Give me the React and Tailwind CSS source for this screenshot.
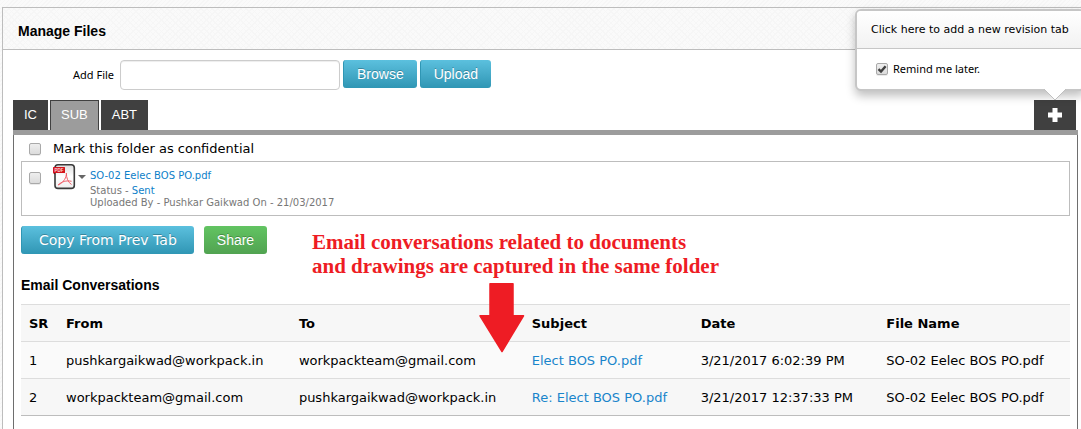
import { useState } from 'react';

const TABS = ['IC', 'SUB', 'ABT'];

const EMAILS = [
  {
    sr: 1,
    from: 'pushkargaikwad@workpack.in',
    to: 'workpackteam@gmail.com',
    subject: 'Elect BOS PO.pdf',
    date: '3/21/2017 6:02:39 PM',
    file: 'SO-02 Eelec BOS PO.pdf',
  },
  {
    sr: 2,
    from: 'workpackteam@gmail.com',
    to: 'pushkargaikwad@workpack.in',
    subject: 'Re: Elect BOS PO.pdf',
    date: '3/21/2017 12:37:33 PM',
    file: 'SO-02 Eelec BOS PO.pdf',
  },
];

const button =
  'h-7 rounded-[3px] text-white text-sm [text-shadow:0_-1px_0_rgba(0,0,0,0.25)] cursor-pointer whitespace-nowrap';
const blue = 'bg-linear-to-b from-[#5bc0de] to-[#2f96b4] border-l border-[#2f96b4]';
const green = 'bg-linear-to-b from-[#62c462] to-[#51a351]';

function Checkbox({ id, label, ...props }) {
  return (
    <span className="relative block size-3 shrink-0">
      <input
        id={id}
        type="checkbox"
        aria-label={label}
        className="peer block appearance-none size-3 rounded-[2px] border border-[#a9a9a9] bg-linear-to-b from-[#eeeeee] to-[#dcdcdc] shadow-[0_1px_0_rgba(0,0,0,0.08)]"
        {...props}
      />
      <svg viewBox="0 0 12 12" className="absolute inset-0 size-3 hidden peer-checked:block pointer-events-none">
        <path d="M2.5 6.2 5 8.6 9.6 3.2" fill="none" stroke="#404040" strokeWidth="2.4" />
      </svg>
    </span>
  );
}

function PdfIcon() {
  return (
    <svg width="23" height="26" viewBox="0 0 23 26" className="shrink-0">
      <defs>
        <linearGradient id="page" x1="0" y1="0" x2="0" y2="1">
          <stop offset="0" stopColor="#dedede" />
          <stop offset="0.5" stopColor="#ffffff" />
          <stop offset="1" stopColor="#eeeeee" />
        </linearGradient>
      </defs>
      <rect x="2" y="0.8" width="19.3" height="23.6" rx="3" fill="url(#page)" stroke="#3a3a3a" strokeWidth="1.6" />
      <path
        d="M13.400 9.500C13.600 13 11 18.500 5.500 20.800M13.400 9.500C13.200 13.500 15 18.500 18.200 20.300M5.500 20.600C9 17.500 13 16.300 18.200 17.200"
        fill="none"
        stroke="#f0606a"
        strokeWidth="1"
        strokeLinecap="round"
      />
      <rect x="0" y="3" width="12" height="6" rx="0.5" fill="#d3141c" />
      <path d="M0 9h2v1.500z" fill="#7d0a0f" />
      <text x="1.500" y="7.800" fontSize="4.500" fontWeight="bold" fill="#ffd9d9" fontFamily="Liberation Sans, sans-serif">
        PDF
      </text>
    </svg>
  );
}

function RevisionPopover() {
  const [remind, setRemind] = useState(true);

  return (
    <div className="absolute -right-1 top-[9px] w-[230px] rounded-[6px] border-2 border-[#c6c6c6] bg-white shadow-[0_5px_10px_rgba(0,0,0,0.25)]">
      <p className="h-[38px] border-b border-[#c6c6c6] rounded-t-[4px] bg-linear-to-b from-white to-[#f2f2f2] pl-3.5 leading-[38px] text-[11px] whitespace-nowrap">
        Click here to add a new revision tab
      </p>
      <div className="flex h-10 items-center gap-[5px] pl-[19px]">
        <Checkbox id="remind" checked={remind} onChange={e => setRemind(e.target.checked)} />
        <label htmlFor="remind" className="font-['Noto_Sans',sans-serif] text-[11px]">
          Remind me later.
        </label>
      </div>
      <svg width="24" height="12" viewBox="0 0 24 12" className="absolute top-full right-4">
        <path d="M1 0 12 11 23 0z" fill="#fff" />
        <path d="M1 0 12 11 23 0" fill="none" stroke="#c0c0c0" />
      </svg>
    </div>
  );
}

export default function App() {
  const [tab, setTab] = useState('SUB');
  const [path, setPath] = useState('');

  return (
    <div className="relative flex min-h-screen flex-col overflow-hidden bg-[#fafafa] bg-[repeating-linear-gradient(135deg,#f6f6f6_0_1px,transparent_1px_3px)] pl-0.5 pt-[7px] font-['DejaVu_Sans',Verdana,sans-serif] text-black">
      <section className="flex grow flex-col border-l border-t border-[#bdbdbd] bg-white">
        <header className="flex h-[42px] items-center border-b border-[#bdbdbd] bg-[#fafafa] bg-[repeating-linear-gradient(45deg,#f6f6f6_0_1px,transparent_1px_4px),repeating-linear-gradient(135deg,#f6f6f6_0_1px,transparent_1px_4px)] pl-[15px] pt-1">
          <h1 className="font-['Liberation_Sans',Arial,sans-serif] text-sm font-bold">Manage Files</h1>
        </header>

        <div className="flex grow flex-col pl-2.5 pr-[3px] pt-2.5">
          <div className="flex items-start gap-[3px] pl-[60px] font-['Liberation_Sans',Arial,sans-serif]">
            <label htmlFor="file" className="w-11 leading-[30px] font-['Noto_Sans',sans-serif] text-[11px] whitespace-nowrap">
              Add File
            </label>
            <input
              id="file"
              type="text"
              value={path}
              onChange={e => setPath(e.target.value)}
              className="h-[30px] w-[220px] rounded-[4px] border border-[#cccccc] bg-white px-2 text-sm shadow-[inset_0_1px_1px_rgba(0,0,0,0.075)]"
            />
            <button type="button" className={`${button} ${blue} px-[13px]`}>Browse</button>
            <button type="button" className={`${button} ${blue} px-[13px]`}>Upload</button>
          </div>

          <div className="mt-2.5 flex items-end gap-0.5 border-b-[5px] border-[#9c9c9c] font-['Liberation_Sans',Arial,sans-serif] text-[13px] text-white">
            {TABS.map(name => (
              <button
                key={name}
                type="button"
                onClick={() => setTab(name)}
                className={`h-[30px] border border-b-0 border-[#404040] px-2.5 pb-0.5 ${
                  name === tab ? 'bg-[#9c9c9c]' : 'bg-[#404040]'
                }`}
              >
                {name}
              </button>
            ))}
            <button
              type="button"
              aria-label="Add revision tab"
              className="ml-auto mr-0.5 flex h-[30px] w-[42px] items-center justify-center bg-[#404040]"
            >
              <svg width="14" height="14" viewBox="0 0 14 14">
                <path d="M4.500 0h5v4.500H14v5H9.500V14h-5V9.500H0v-5h4.500z" fill="#fff" />
              </svg>
            </button>
          </div>

          <div className="relative grow border-x border-[#6e6e6e] px-[7px] pb-3 text-[13px]">
            <div className="flex h-[26px] items-center gap-3 pl-2 pt-0.5">
              <Checkbox id="confidential" />
              <label htmlFor="confidential">Mark this folder as confidential</label>
            </div>

            <div className="flex h-[55px] items-start border border-[#bdbdbd] pl-[7px] pt-0.5">
              <div className="pt-2">
                <Checkbox label="Select SO-02 Eelec BOS PO.pdf" />
              </div>
              <div className="flex items-center gap-0.5 pl-3">
                <PdfIcon />
                <svg width="8" height="4" viewBox="0 0 8 4">
                  <path d="M0 0h8L4 4z" fill="#666" />
                </svg>
              </div>
              <div className="pl-1 pt-1 text-[10px] leading-3 text-[#777777]">
                <a href="#file" className="mb-px block leading-4 text-[#0e7fc9]">SO-02 Eelec BOS PO.pdf</a>
                <p>Status - <a href="#status" className="text-[#0e7fc9]">Sent</a></p>
                <p>Uploaded By - Pushkar Gaikwad On - 21/03/2017</p>
              </div>
            </div>

            <div className="mt-2.5 flex gap-2.5">
              <button type="button" className={`${button} ${blue} px-[17px]`}>Copy From Prev Tab</button>
              <button type="button" className={`${button} ${green} px-[13px] font-['Liberation_Sans',Arial,sans-serif]`}>
                Share
              </button>
            </div>

            <h2 className="mt-[21px] font-['Liberation_Sans',Arial,sans-serif] text-sm leading-5 font-bold">
              Email Conversations
            </h2>

            <table className="mt-[9px] w-full table-fixed border-collapse border-b border-[#bdbdbd] bg-[#f7f7f7] text-left text-[13px] whitespace-nowrap">
              <colgroup>
                <col className="w-[37px]" />
                <col className="w-[22.2%]" />
                <col className="w-[22.2%]" />
                <col className="w-[16.1%]" />
                <col className="w-[17.7%]" />
                <col />
              </colgroup>
              <thead>
                <tr className="h-[37px] border-t border-[#dddddd]">
                  {['SR', 'From', 'To', 'Subject', 'Date', 'File Name'].map(h => (
                    <th key={h} scope="col" className="pl-2 pt-0.5 font-bold">{h}</th>
                  ))}
                </tr>
              </thead>
              <tbody>
                {EMAILS.map(mail => (
                  <tr key={mail.sr} className="h-[37px] border-t border-[#dddddd] odd:bg-[#fafafa]">
                    <td className="pl-2 pt-0.5">{mail.sr}</td>
                    <td className="pl-2 pt-0.5">{mail.from}</td>
                    <td className="pl-2 pt-0.5">{mail.to}</td>
                    <td className="pl-2 pt-0.5">
                      <a href="#mail" className="text-[#1985cb]">{mail.subject}</a>
                    </td>
                    <td className="pl-2 pt-0.5">{mail.date}</td>
                    <td className="pl-2 pt-0.5">{mail.file}</td>
                  </tr>
                ))}
              </tbody>
            </table>

            {/* callout over the table */}
            <div className="pointer-events-none absolute left-[298px] top-[95px] text-[#ee1c24]">
              <p className="font-['Liberation_Serif','Times_New_Roman',serif] text-[21px] leading-6 font-bold whitespace-nowrap">
                Email conversations related to documents
                <br />
                and drawings are captured in the same folder
              </p>
              <svg width="46" height="70" viewBox="0 0 46 70" className="ml-[167px] mt-[5px]">
                <path
                  d="M11 .8h23v32h10.500L23 68.500 1 32.800h10z"
                  fill="#ee1c24"
                  stroke="#ee1c24"
                  strokeWidth="1.500"
                  strokeLinejoin="round"
                />
              </svg>
            </div>
          </div>
        </div>
      </section>

      <RevisionPopover />
    </div>
  );
}
